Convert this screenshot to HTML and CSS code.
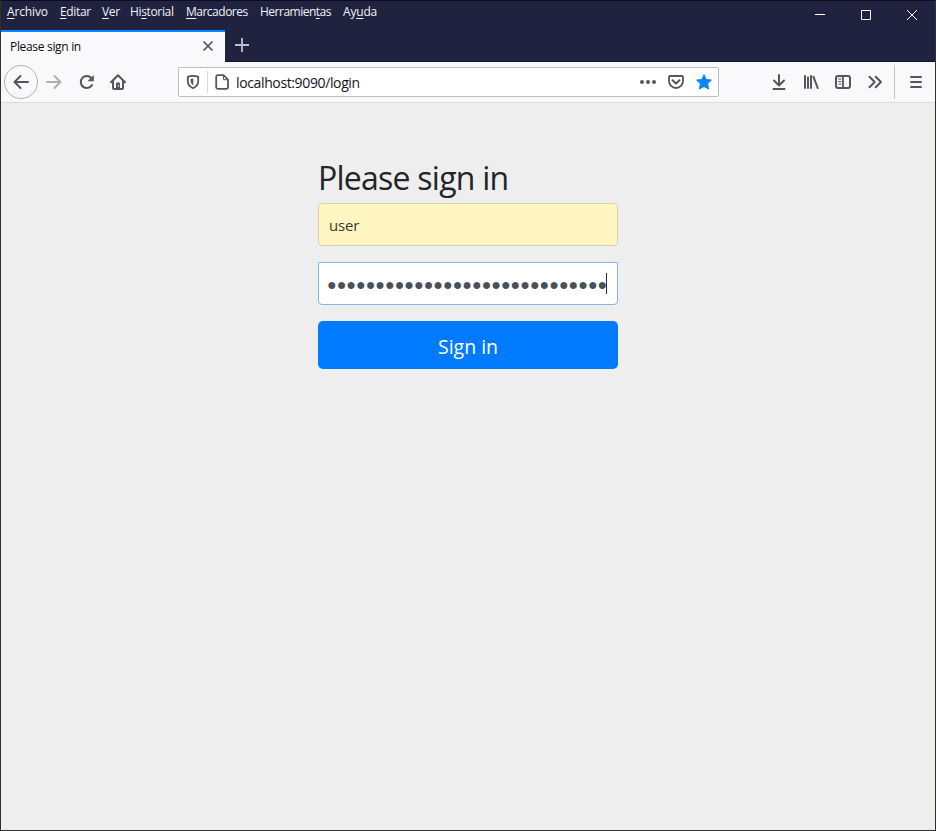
FILE: index.html
```html
<!DOCTYPE html>
<html lang="es">
<head>
<meta charset="utf-8">
<title>Please sign in</title>
<link rel="stylesheet" href="styles.css">
</head>
<body>
<div class="window">
  <header class="titlebar">
    <div class="titlebar-left">
      <nav class="menu">
        <span class="m1"><u>A</u>rchivo</span><span class="m2"><u>E</u>ditar</span><span class="m3"><u>V</u>er</span><span class="m4">Hi<u>s</u>torial</span><span class="m5"><u>M</u>arcadores</span><span class="m6">Herramien<u>t</u>as</span><span class="m7">Ay<u>u</u>da</span>
      </nav>
      <div class="tabs">
        <div class="tab">
          <span class="tab-title">Please sign in</span>
          <svg class="tab-close" width="12" height="12" viewBox="0 0 12 12"><path d="M1.500 1.500l9 9M10.500 1.500l-9 9" fill="none" stroke="#55555a" stroke-width="1.700"/></svg>
        </div>
        <svg class="new-tab" width="14" height="14" viewBox="0 0 14 14"><path d="M7 0v14M0 7h14" stroke="#c0c0cc" stroke-width="1.800"/></svg>
      </div>
    </div>
    <div class="controls">
      <svg width="46" height="28" viewBox="0 0 46 28"><path d="M18 13.500h10" stroke="#fff"/></svg>
      <svg width="46" height="28" viewBox="0 0 46 28"><path d="M18.500 9.500h9v9h-9z" fill="none" stroke="#fff"/></svg>
      <svg width="46" height="28" viewBox="0 0 46 28"><path d="M18 9l10 10M28 9l-10 10" stroke="#fff"/></svg>
    </div>
  </header>

  <div class="toolbar">
    <div class="back"><svg width="16" height="16" viewBox="0 0 16 16"><path d="M15 8H1.500M7.500 2L1.500 8l6 6" class="line"/></svg></div>
    <svg class="forward" width="16" height="16" viewBox="0 0 16 16"><path d="M1 8h13.500M8.500 2l6 6-6 6" class="line"/></svg>
    <svg class="reload" width="16" height="16" viewBox="0 0 16 16"><path d="M12.300 4A6 6 0 1 0 13 11" class="line"/><path d="M14.800 1v6.300H8.500z" class="solid"/></svg>
    <svg class="home" width="16" height="16" viewBox="0 0 16 16"><path d="M1 8.300L8 1.300l7 7M3 7.500V14a1 1 0 0 0 1 1h8a1 1 0 0 0 1-1V7.500" class="line"/><path d="M6 15V9.500a1 1 0 0 1 1-1h2a1 1 0 0 1 1 1V15z" class="solid"/><path d="M8.500 11v1.500" stroke="#f9f9fb"/></svg>
    <div class="urlbar">
      <svg class="shield" width="14" height="16" viewBox="0 0 14 16"><path d="M7 1.900c2 0 3.500.2 5.200.9V7c0 3.400-2 5.800-5.200 7.200C3.800 12.800 1.800 10.400 1.800 7V2.800C3.500 2.100 5 1.900 7 1.900z" class="line thin"/><path d="M7.300 4.500v7C5.200 10.300 4.600 8.500 4.600 6.500V4.900z" class="solid"/></svg>
      <i class="url-sep"></i>
      <svg class="page-icon" width="14" height="16" viewBox="0 0 14 16"><path d="M3 1.200h5.500L13 5.700V13a1.800 1.800 0 0 1-1.800 1.800H3A1.800 1.800 0 0 1 1.200 13V3A1.800 1.800 0 0 1 3 1.200z" class="line thin"/><path d="M8.500 1.500V5.700H12.700" class="line hair"/></svg>
      <span class="url">localhost:9090/login</span>
      <svg class="dots" width="16" height="16" viewBox="0 0 16 16"><g class="solid"><circle cx="2" cy="8" r="2"/><circle cx="8" cy="8" r="2"/><circle cx="14" cy="8" r="2"/></g></svg>
      <svg class="pocket" width="16" height="16" viewBox="0 0 16 16"><path d="M2.200 2h11.600c.7 0 1.200.5 1.200 1.200V7a7 7 0 0 1-14 0V3.200C1 2.500 1.500 2 2.200 2z" class="line thin"/><path d="M4.500 6.200L8 9.500l3.500-3.300" class="line"/></svg>
      <svg class="star" width="16" height="16" viewBox="0 0 16 16"><path d="M8 .8l2.200 4.700 5.200.6-3.800 3.600 1 5.300L8 12.500 3.400 15l1-5.300L.6 6.100l5.200-.6z" fill="#0a84ff" stroke="#0a84ff" stroke-linejoin="round"/></svg>
    </div>
    <svg class="download" width="16" height="16" viewBox="0 0 16 16"><path d="M8 1V11M3 6.500l5 5 5-5M2.500 15h11" class="line"/></svg>
    <svg class="library" width="16" height="16" viewBox="0 0 16 16"><path d="M2 2v12M5 3.500v10.500M8 2v12M10.500 2.800l4.200 11.200" class="line"/></svg>
    <svg class="sidebar" width="16" height="16" viewBox="0 0 16 16"><rect x="1" y="2" width="14" height="12" rx="2" class="line"/><path d="M8 2v12" class="line thin"/><path d="M3.500 5h2.500M3.500 7.500h2.500M4 10h2" class="line hair"/></svg>
    <svg class="more" width="16" height="16" viewBox="0 0 16 16"><path d="M2.500 2.700L7.700 8l-5.200 5.300M8.700 2.700L13.900 8l-5.200 5.300" class="line"/></svg>
    <i class="bar-sep"></i>
    <svg class="burger" width="16" height="16" viewBox="0 0 16 16"><path d="M3 3h10M3 8h10M3 13h10" class="line"/></svg>
  </div>

  <main class="page">
    <form class="form-signin">
      <h2>Please sign in</h2>
      <div class="field user"><span>user</span></div>
      <div class="field password"><span class="mask">●●●●●●●●●●●●●●●●●●●●●●●●●●●●●</span><i class="caret"></i></div>
      <div class="submit" role="button"><span>Sign in</span></div>
    </form>
  </main>
</div>
</body>
</html>
```
FILE: styles.css
```css
* { box-sizing: border-box; }
body {
  margin: 0;
  font-family: "Open Sans", "Noto Sans", sans-serif;
  background: #eee;
}
svg { display: block; flex: none; }
.line { fill: none; stroke: #55555a; stroke-width: 2; stroke-linecap: round; stroke-linejoin: round; }
.thin { stroke-width: 1.800; }
.hair { stroke-width: 1; }
.solid { fill: #55555a; }

.window {
  height: 831px;
  display: flex;
  flex-direction: column;
  border: 1px solid #303129;
  border-top-color: #0b0c1c;
  overflow: hidden;
}

.titlebar {
  height: 61px;
  display: flex;
  justify-content: space-between;
  background: #202340;
  border-bottom: 1px solid #15162d;
}
.menu {
  display: flex;
  gap: 12px;
  height: 29px;
  padding: 2px 0 0 6px;
  font-size: 12px;
  letter-spacing: -0.35px;
  line-height: 17px;
  color: #f2f2f7;
  white-space: nowrap;
}
.menu u { text-underline-offset: 2px; text-decoration-skip-ink: none; }
.m1 { width: 41px; letter-spacing: -0.15px; }
.m2 { width: 30px; }
.m3 { width: 16px; }
.m4 { width: 44px; }
.m5 { width: 62px; letter-spacing: -0.5px; }
.m6 { width: 71px; letter-spacing: -0.5px; }
.m7 { width: 34px; letter-spacing: -0.2px; }
.tabs { display: flex; height: 32px; }
.tab {
  width: 224px;
  display: flex;
  align-items: center;
  justify-content: space-between;
  padding: 0 11px 2px 9px;
  border-top: 2px solid #0a84ff;
  background: #f9f9fb;
}
.tab-title { font-size: 12px; letter-spacing: -0.32px; line-height: 16px; color: #0c0c0d; padding-top: 2px; }
.new-tab { margin: 8px 0 0 10px; }
.controls { display: flex; }

.toolbar {
  height: 41px;
  display: flex;
  align-items: center;
  background: #f9f9fb;
  border-bottom: 1px solid #dcdcdf;
}
.back {
  width: 34px;
  height: 34px;
  margin-left: 3px;
  border: 1px solid #b1b1b5;
  border-radius: 50%;
  display: grid;
  place-items: center;
}
.forward { margin-left: 8px; opacity: .45; }
.reload { margin-left: 17px; }
.home { margin-left: 15px; }
.urlbar {
  width: 541px;
  height: 30px;
  margin-left: 52px;
  display: flex;
  align-items: center;
  background: #fff;
  border: 1px solid #bebec3;
  border-radius: 2px;
}
.shield { margin-left: 7px; }
.url-sep { width: 1px; height: 22px; margin-left: 7px; background: #d9d9dc; }
.page-icon { margin-left: 7px; }
.url { flex: 1; margin-left: 7px; font-size: 14px; letter-spacing: -0.37px; line-height: 20px; color: #15141a; padding-top: 2px; }
.pocket { margin-left: 12px; }
.star { margin: 0 6px 0 12px; }
.download { margin-left: 52px; }
.library, .sidebar, .more { margin-left: 16px; }
.bar-sep { width: 1px; height: 34px; margin-left: 11px; background: #c4c4c8; }
.burger { margin-left: 13px; }

.page { flex: 1; background: #eee; padding-top: 56px; }
.form-signin { width: 300px; margin: 0 auto; }
h2 { margin: 0 0 6px; font-size: 32px; letter-spacing: -0.75px; font-weight: 400; line-height: 38px; color: #212529; white-space: nowrap; }
.field {
  height: 43px;
  display: flex;
  align-items: center;
  padding: 0 10px;
  font-size: 16px;
  line-height: 24px;
  border: 1px solid #ced4da;
  border-radius: 4px;
  white-space: nowrap;
}
.user { background: #fff6c2; border-color: #d5d0ae; color: #3b3928; font-size: 15px; letter-spacing: -0.2px; padding-top: 1px; margin-bottom: 16px; }
.password { background: #fff; border-color: #86b4e8; border-radius: 0 0 4px 4px; color: #495057; font-family: "Liberation Sans", sans-serif; padding: 2px 9px 0 8px; margin-bottom: 16px; }
.caret { flex: none; width: 1px; height: 21px; margin: 0 0 2px -1px; background: #2b3035; }
.submit {
  height: 48px;
  display: grid;
  place-items: center;
  padding-top: 3px;
  background: #007bff;
  border-radius: 5px;
  color: #fff;
  font-size: 19.500px;
  line-height: 30px;
}
```
